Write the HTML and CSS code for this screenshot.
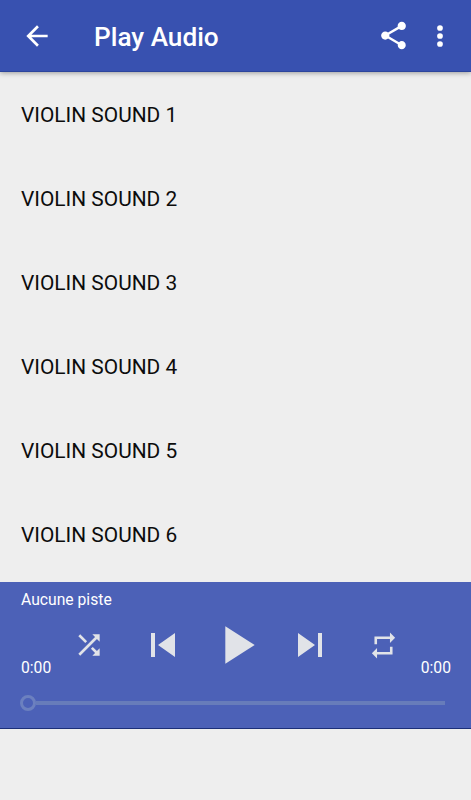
FILE: index.html
```html
<!DOCTYPE html>
<html lang="en">
<head>
  <meta charset="UTF-8" />
  <meta name="viewport" content="width=device-width, initial-scale=1.0"/>
  <title>Play Audio</title>
  <link rel="stylesheet" href="styles.css">
</head>
<body>

  <header class="toolbar">
    <button class="back" aria-label="Back">
      <svg class="icon" viewBox="0 0 24 24"><path d="M20 11H7.83l5.59-5.59L12 4l-8 8 8 8 1.41-1.41L7.83 13H20v-2z"/></svg>
    </button>
    <h1>Play Audio</h1>
    <button class="share" aria-label="Share">
      <svg class="icon" viewBox="0 0 24 24"><path d="M18 16.08c-.76 0-1.44.3-1.96.77L8.91 12.7c.05-.23.09-.46.09-.7s-.04-.47-.09-.7l7.05-4.11c.54.5 1.25.81 2.04.81 1.66 0 3-1.34 3-3s-1.34-3-3-3-3 1.34-3 3c0 .24.04.47.09.7L8.04 9.81C7.5 9.31 6.79 9 6 9c-1.66 0-3 1.34-3 3s1.34 3 3 3c.79 0 1.5-.31 2.04-.81l7.12 4.16c-.05.21-.08.43-.08.65 0 1.61 1.31 2.92 2.92 2.92s2.92-1.31 2.92-2.92-1.31-2.92-2.92-2.92z"/></svg>
    </button>
    <button class="more" aria-label="More">
      <svg class="icon" viewBox="0 0 24 24"><circle cx="12" cy="6" r="2.15"/><circle cx="12" cy="12" r="2.15"/><circle cx="12" cy="18" r="2.15"/></svg>
    </button>
  </header>

  <ul class="tracks">
    <li>VIOLIN SOUND 1</li>
    <li>VIOLIN SOUND 2</li>
    <li>VIOLIN SOUND 3</li>
    <li>VIOLIN SOUND 4</li>
    <li>VIOLIN SOUND 5</li>
    <li>VIOLIN SOUND 6</li>
  </ul>

  <section class="player">
    <div class="track-name">Aucune piste</div>
    <div class="controls">
      <span class="time">0:00</span>
      <div class="buttons">
        <button aria-label="Shuffle">
          <svg class="icon" viewBox="0 0 24 24"><path d="M10.59 9.17L5.41 4 4 5.41l5.17 5.17 1.42-1.41zM14.5 4l2.04 2.04L4 18.59 5.41 20 17.96 7.46 20 9.5V4h-5.5zm.33 9.41l-1.41 1.41 3.13 3.13L14.5 20H20v-5.5l-2.04 2.04-3.13-3.13z"/></svg>
        </button>
        <button aria-label="Previous">
          <svg class="icon skip" viewBox="0 0 24 24"><path d="M6 6h2v12H6zm3.5 6l8.5 6V6z"/></svg>
        </button>
        <button class="play" aria-label="Play">
          <svg class="icon" viewBox="0 0 24 24"><path d="M8 5v14l11-7z"/></svg>
        </button>
        <button aria-label="Next">
          <svg class="icon skip" viewBox="0 0 24 24"><path d="M6 18l8.500-6L6 6v12zM16 6v12h2V6h-2z"/></svg>
        </button>
        <button class="repeat" aria-label="Repeat">
          <svg class="icon" viewBox="0 0 24 24"><path d="M7 7h10v3l4-4-4-4v3H5v6h2V7zm10 10H7v-3l-4 4 4 4v-3h12v-6h-2v4z"/></svg>
        </button>
      </div>
      <span class="time">0:00</span>
    </div>
    <div class="seekbar">
      <div class="thumb"></div>
      <div class="line"></div>
    </div>
  </section>

</body>
</html>
```

FILE: styles.css
```css
* {
  box-sizing: border-box;
}

body {
  font-family: Roboto, "Liberation Sans", sans-serif;
  height: 100vh;
  margin: 0;
  background-color: #eee;
  overflow: hidden;
}

button {
  display: flex;
  align-items: center;
  justify-content: center;
  padding: 0;
  border: none;
  background: none;
  color: inherit;
  cursor: pointer;
}

.icon {
  display: block;
  flex: none;
  width: 32px;
  height: 32px;
  fill: currentColor;
}

.toolbar {
  display: flex;
  align-items: center;
  height: 72px;
  padding: 0 15px 0 21px;
  background-color: #3851b0;
  border-bottom: 1px solid #2c459c;
  color: #fff;
  box-shadow: 0 1px 5px rgba(0, 0, 0, 0.35);
}

.toolbar h1 {
  flex: 1;
  margin: 0 0 0 41px;
  padding-top: 2px;
  font-size: 26.2px;
  font-weight: 500;
  line-height: 32px;
}

.share .icon {
  width: 33px;
  height: 33px;
}

.more {
  margin-left: 14px;
}

.tracks {
  height: 510px;
  margin: 0;
  padding: 1px 0 0;
  list-style: none;
}

.tracks li {
  height: 84px;
  padding-left: 21px;
  font-size: 20.9px;
  line-height: 84px;
  color: #0c0c0c;
}

.player {
  height: 147px;
  padding: 8px 20px 0 21px;
  background-color: #4c61b7;
  border-bottom: 1px solid #1c2f78;
  color: #fff;
}

.track-name {
  font-size: 15.7px;
  line-height: 20px;
}

.controls {
  display: flex;
  justify-content: space-between;
  height: 72px;
}

.time {
  align-self: flex-end;
  font-size: 15.7px;
  line-height: 20px;
  margin-bottom: 4px;
}

.buttons {
  display: flex;
  align-items: center;
  padding-bottom: 2px;
  color: #e1e3e8;
}

.buttons button {
  width: 73.5px;
}

.buttons .skip {
  width: 48px;
  height: 48px;
}

.play .icon {
  width: 64px;
  height: 64px;
}

.repeat .icon {
  width: 31px;
  height: 31px;
}

.seekbar {
  display: flex;
  align-items: center;
  height: 42px;
  margin: 0 6px 0 -1px;
}

.thumb {
  width: 16px;
  height: 16px;
  border: 3px solid #6c80bf;
  border-radius: 50%;
}

.line {
  flex: 1;
  height: 4px;
  background-color: #677cba;
}
```
